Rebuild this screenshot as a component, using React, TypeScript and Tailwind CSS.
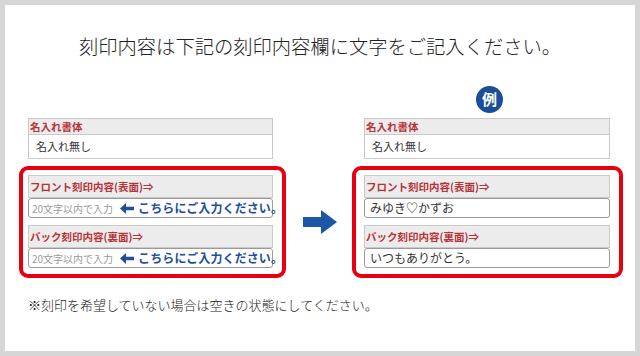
const jp = { fontFamily: '"Noto Sans CJK JP", sans-serif' }

const FieldHead = ({ label, tall }: { label: string; tall?: boolean }) => (
  <div
    className={`flex items-center border border-[#c9c9c9] bg-[#ececec] pl-[1px] text-[10.5px] font-bold text-[#b8323a] ${tall ? 'h-[23px]' : 'h-[17px]'}`}
  >
    {label}
  </div>
)

const EmptyInput = () => (
  <div className="flex h-[20px] items-center whitespace-nowrap rounded-[3px] border border-[#9a9a9a] bg-white pl-[3px]">
    <span className="shrink-0 text-[10px] text-[#9a9a9a]">20文字以内で入力</span>
    {/* bold left arrow */}
    <svg className="ml-[7px] mr-[4px] shrink-0" width="14" height="11" viewBox="0 0 14 11">
      <path d="M0 5.5 L6 0 V3.8 H14 V7.2 H6 V11 Z" fill="#1f4f9c" />
    </svg>
    <span className="shrink-0 text-[12px] font-bold tracking-[0.1px] text-[#1f4f9c]">こちらにご入力ください。</span>
  </div>
)

const FilledInput = ({ value }: { value: string }) => (
  <div className="flex h-[20px] items-center rounded-[3px] border border-[#9a9a9a] bg-white pl-[5px] text-[12px] text-[#333]">
    {value}
  </div>
)

const FontBox = () => (
  <div>
    <FieldHead label="名入れ書体" />
    <div className="flex h-[24px] items-center border border-t-0 border-[#c9c9c9] bg-white pl-[7px] text-[11px] text-[#333]">
      名入れ無し
    </div>
  </div>
)

export default function App() {
  return (
    <div className="h-[356px] w-[640px] bg-[#d6d6d6] p-[5px]" style={jp}>
      <div className="flex h-[346px] w-[630px] flex-col bg-white">
        {/* title */}
        <div className="mt-[27px] text-center text-[19.3px] font-light leading-[28px] text-[#222]">
          刻印内容は下記の刻印内容欄に文字をご記入ください。
        </div>

        <div className="mt-[26px] flex items-start pl-[14px]">
          {/* input side */}
          <div className="mt-[32px] w-[267px]">
            <div className="ml-[9px] w-[245px]">
              <FontBox />
            </div>
            <div className="mt-[7px] h-[112px] rounded-[9px] border-4 border-[#e60012] pl-[5px] pt-[5px]">
              <div className="w-[245px]">
                <FieldHead label="フロント刻印内容(表面)⇒" tall />
                <EmptyInput />
                <div className="mt-[7px]">
                  <FieldHead label="バック刻印内容(裏面)⇒" tall />
                  <EmptyInput />
                </div>
              </div>
            </div>
          </div>

          {/* arrow */}
          <svg className="ml-[17px] mt-[124px]" width="34" height="24" viewBox="0 0 34 24">
            <path d="M0 7 H18 V0 L34 12 L18 24 V17 H0 Z" fill="#1c56a6" />
          </svg>

          {/* example side */}
          <div className="ml-[15px] w-[271px]">
            <div className="flex justify-center pl-[4px]">
              <div className="flex h-[27px] w-[27px] items-center justify-center rounded-full bg-[#1b4e98] text-[15px] font-bold text-white">
                例
              </div>
            </div>
            <div className="ml-[12px] mt-[5px] w-[246px]">
              <FontBox />
            </div>
            <div className="mt-[7px] h-[112px] rounded-[9px] border-4 border-[#e60012] pl-[8px] pt-[5px]">
              <div className="w-[246px]">
                <FieldHead label="フロント刻印内容(表面)⇒" tall />
                <FilledInput value="みゆき♡かずお" />
                <div className="mt-[7px]">
                  <FieldHead label="バック刻印内容(裏面)⇒" tall />
                  <FilledInput value="いつもありがとう。" />
                </div>
              </div>
            </div>
          </div>
        </div>

        {/* note */}
        <div className="ml-[23px] mt-[18px] text-[13px] font-light leading-[18px] text-[#222]">
          ※刻印を希望していない場合は空きの状態にしてください。
        </div>
      </div>
    </div>
  )
}
